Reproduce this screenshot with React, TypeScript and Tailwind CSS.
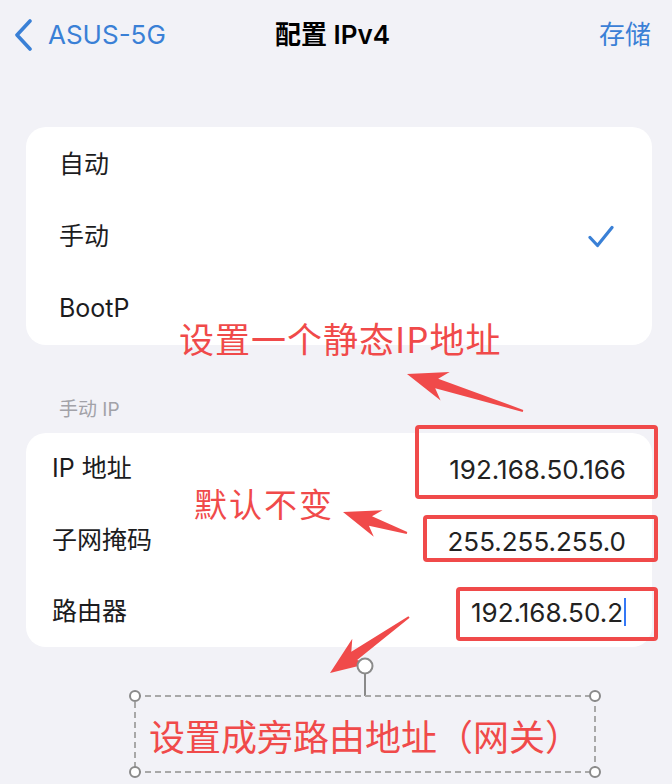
import React from 'react';

type Pt = [number, number];

// tapered annotation arrow, thin tail -> wide head
function arrowPoints(tail: Pt, tip: Pt, headLen: number, headHalf: number, neckHalf: number, tailHalf: number) {
  const dx = tip[0] - tail[0];
  const dy = tip[1] - tail[1];
  const len = Math.hypot(dx, dy);
  const ux = dx / len;
  const uy = dy / len;
  const nx = -uy;
  const ny = ux;
  const base: Pt = [tip[0] - ux * headLen, tip[1] - uy * headLen];
  const neck: Pt = [tip[0] - ux * headLen * 0.78, tip[1] - uy * headLen * 0.78];
  const pts: Pt[] = [
    tip,
    [base[0] + nx * headHalf, base[1] + ny * headHalf],
    [neck[0] + nx * neckHalf, neck[1] + ny * neckHalf],
    [tail[0] + nx * tailHalf, tail[1] + ny * tailHalf],
    [tail[0] - nx * tailHalf, tail[1] - ny * tailHalf],
    [neck[0] - nx * neckHalf, neck[1] - ny * neckHalf],
    [base[0] - nx * headHalf, base[1] - ny * headHalf],
  ];
  return pts.map((p) => `${p[0].toFixed(1)},${p[1].toFixed(1)}`).join(' ');
}

const Chevron = () => (
  <svg width="20" height="32" viewBox="0 0 20 32" fill="none">
    <path d="M16 2L3 16L16 30" stroke="#3a80d6" strokeWidth="3.6" strokeLinecap="round" strokeLinejoin="round" />
  </svg>
);

const Check = () => (
  <svg width="26" height="24" viewBox="0 0 26 24" fill="none">
    <path d="M2 12.5L9.5 20.5L24 2.5" stroke="#3a80d6" strokeWidth="3.2" strokeLinecap="round" strokeLinejoin="round" />
  </svg>
);

function Annotations() {
  const red = '#f04a4a';
  return (
    <svg className="absolute inset-0 pointer-events-none" width="672" height="784" viewBox="0 0 672 784">
      {/* red frames round the values */}
      <rect x="417" y="427" width="239" height="70" rx="2" fill="none" stroke={red} strokeWidth="4" />
      <rect x="425" y="517" width="231" height="43" rx="2" fill="none" stroke={red} strokeWidth="4" />
      <rect x="458" y="589" width="198" height="50" rx="2" fill="none" stroke={red} strokeWidth="4" />

      <polygon points={arrowPoints([523, 411], [407, 374], 40, 15, 5, 1)} fill={red} />
      <polygon points={arrowPoints([407, 533], [343, 512], 37, 14, 5, 1)} fill={red} />
      <polygon points={arrowPoints([409, 617], [330, 673], 38, 15, 5, 1)} fill={red} />

      {/* text box selection frame */}
      <line x1="365" y1="673" x2="365" y2="696" stroke="#8a8a8a" strokeWidth="2" />
      <rect x="135" y="696" width="460" height="76" fill="none" stroke="#a8a8a8" strokeWidth="2" strokeDasharray="6 4" />
      <circle cx="365" cy="666" r="7.5" fill="#fff" stroke="#8a8a8a" strokeWidth="2" />
      {[
        [135, 696],
        [595, 696],
        [135, 772],
        [595, 772],
      ].map(([cx, cy]) => (
        <circle key={`${cx}-${cy}`} cx={cx} cy={cy} r="5" fill="#fff" stroke="#8a8a8a" strokeWidth="2" />
      ))}
    </svg>
  );
}

export default function App() {
  const font = "font-['Inter','Noto_Sans_CJK_SC',sans-serif]";
  const cjk = "font-['Noto_Sans_CJK_SC','Noto_Sans',sans-serif]";

  return (
    <div className={`relative w-[672px] h-[784px] overflow-hidden bg-[#f2f2f7] ${font} text-[#1c1c1e]`}>
      {/* nav bar */}
      <div className="grid grid-cols-[1fr_auto_1fr] items-center h-[70px] pl-[14px] pr-[21px]">
        <div className="flex items-center gap-[14px] text-[#3a80d6]">
          <Chevron />
          <span className="text-[26px] leading-none">ASUS-5G</span>
        </div>
        <div className="text-[26px] font-semibold leading-none text-black">配置 IPv4</div>
        <div className="justify-self-end text-[26px] leading-none text-[#3a80d6]">存储</div>
      </div>

      {/* mode card */}
      <div className="ml-[26px] w-[626px] mt-[57px] bg-white rounded-[20px] pt-[2px]">
        <div className="flex items-center h-[72px] pl-[33px] pr-[40px] text-[25px]">自动</div>
        <div className="flex items-center justify-between h-[72px] pl-[33px] pr-[38px] text-[25px]">
          <span>手动</span>
          <Check />
        </div>
        <div className="flex items-center h-[72px] pl-[33px] pr-[40px] text-[25px]">BootP</div>
      </div>

      <div className="ml-[59px] mt-[54px] h-[22px] leading-[22px] text-[19px] text-[#a2a2a8]">手动 IP</div>

      {/* manual ip card */}
      <div className="ml-[26px] w-[626px] mt-[12px] bg-white rounded-[20px]">
        <div className="flex items-center justify-between h-[72px] px-[26px]">
          <span className="text-[25px]">IP 地址</span>
          <span className="text-[26px] text-[#222]">192.168.50.166</span>
        </div>
        <div className="flex items-center justify-between h-[72px] px-[26px]">
          <span className="text-[25px]">子网掩码</span>
          <span className="text-[26px] text-[#222]">255.255.255.0</span>
        </div>
        <div className="flex items-center justify-between h-[70px] px-[26px]">
          <span className="text-[25px]">路由器</span>
          <span className="flex items-center text-[26px] text-[#222]">
            192.168.50.2
            <span className="inline-block w-[2px] h-[28px] ml-[1px] bg-[#3478f6]" />
          </span>
        </div>
      </div>

      <Annotations />

      {/* callout texts */}
      <div className={`absolute left-[179px] top-[318px] text-[35px] leading-[40px] tracking-[1px] text-[#f04a4a] ${cjk}`}>
        设置一个静态IP地址
      </div>
      <div className={`absolute left-[194px] top-[484px] text-[33px] leading-[38px] tracking-[2px] text-[#f04a4a] ${cjk}`}>
        默认不变
      </div>
      <div className={`absolute left-[149px] top-[714px] text-[36px] leading-[42px] text-[#f04a4a] ${cjk}`}>
        设置成旁路由地址（网关）
      </div>
    </div>
  );
}
